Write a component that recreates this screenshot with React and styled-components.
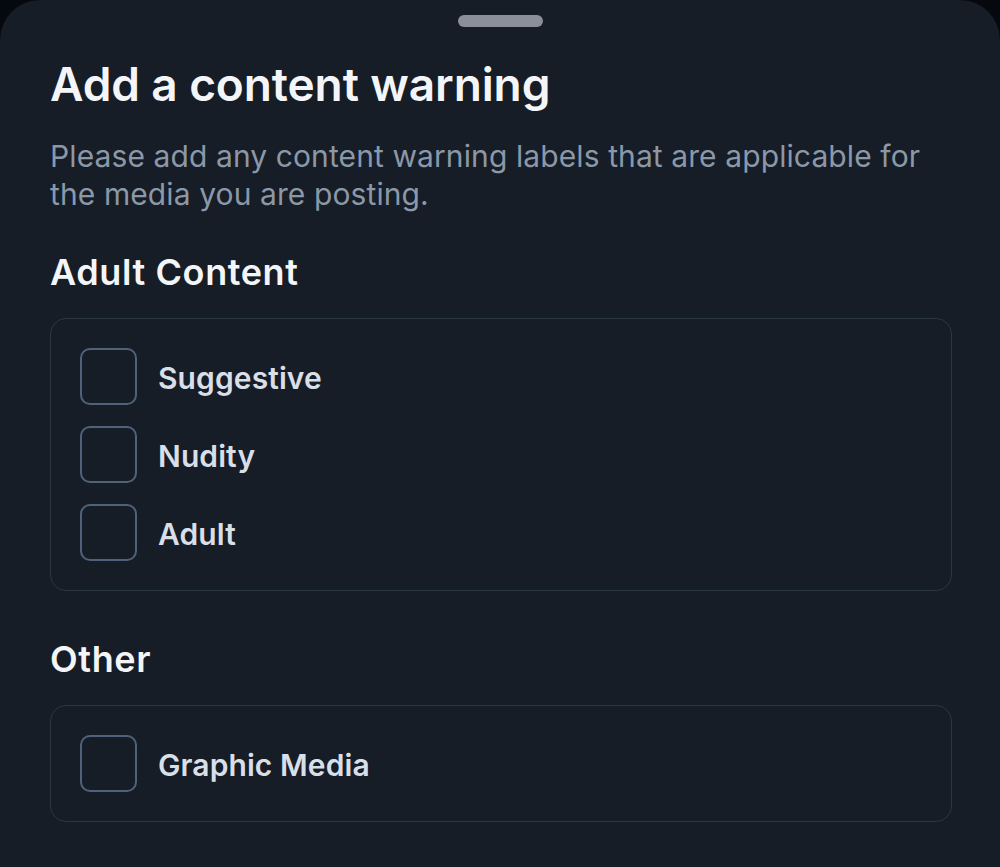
import React from "react";
import styled, { createGlobalStyle } from "styled-components";

const Global = createGlobalStyle`
  html, body { margin: 0; padding: 0; background: #05080c; }
  body { font-family: Inter, "Noto Sans", sans-serif; }
`;

const Screen = styled.div`
  width: 1000px;
  height: 867px;
  background: #05080c;
  overflow: hidden;
`;

const Sheet = styled.div`
  background: #161d26;
  border-radius: 40px 40px 0 0;
  height: 100%;
  box-sizing: border-box;
  padding: 15px 48px 0 50px;
  display: flex;
  flex-direction: column;
`;

const Handle = styled.div`
  align-self: center;
  width: 85px;
  height: 12px;
  border-radius: 6px;
  background: #8a8f99;
  margin-right: 2px;
`;

const Title = styled.h1`
  margin: 29px 0 0;
  font-size: 46px;
  line-height: 56px;
  font-weight: 600;
  color: #f3f5f8;
  letter-spacing: -0.1px;
`;

const Desc = styled.p`
  margin: 25px 0 0;
  font-size: 30px;
  line-height: 38px;
  color: #8b98a8;
  font-weight: 400;
  letter-spacing: 0.1px;
`;

const SectionTitle = styled.h2`
  margin: ${(p) => p.$top}px 0 0;
  font-size: 36px;
  line-height: 44px;
  font-weight: 600;
  color: #f3f5f8;
  letter-spacing: 0.6px;
`;

const Group = styled.div`
  margin-top: 24px;
  border: 1px solid #2b3643;
  border-radius: 16px;
  padding: 29px 29px;
  display: flex;
  flex-direction: column;
  gap: 21px;
`;

const Row = styled.label`
  display: flex;
  align-items: center;
  gap: 21px;
`;

const Box = styled.span`
  width: 53px;
  height: 53px;
  border: 2px solid #50627a;
  border-radius: 10px;
  flex: none;
`;

const Label = styled.span`
  font-size: 30px;
  line-height: 36px;
  padding-top: 3px;
  font-weight: 600;
  color: #d9dfe8;
  letter-spacing: 0.1px;
`;

const Option = ({ children }) => (
  <Row>
    <Box />
    <Label>{children}</Label>
  </Row>
);

export default function App() {
  return (
    <Screen>
      <Global />
      <Sheet>
        <Handle />
        <Title>Add a content warning</Title>
        <Desc>
          Please add any content warning labels that are applicable for the
          media you are posting.
        </Desc>
        <SectionTitle $top={37}>Adult Content</SectionTitle>
        <Group>
          <Option>Suggestive</Option>
          <Option>Nudity</Option>
          <Option>Adult</Option>
        </Group>
        <SectionTitle $top={46}>Other</SectionTitle>
        <Group>
          <Option>Graphic Media</Option>
        </Group>
      </Sheet>
    </Screen>
  );
}
